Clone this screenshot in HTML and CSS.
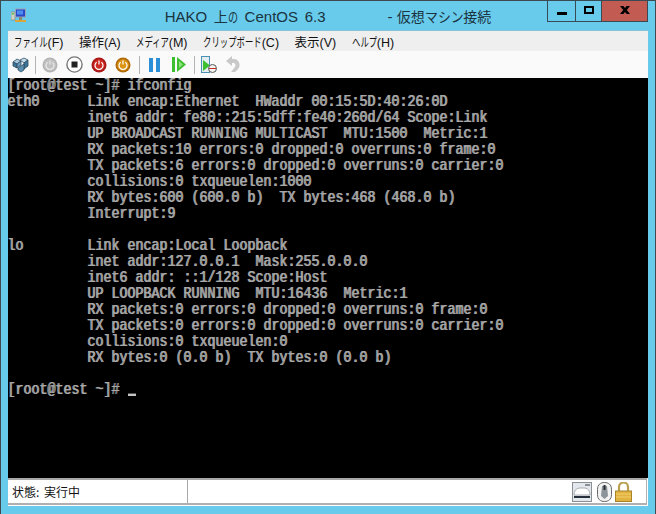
FILE: index.html
```html
<!DOCTYPE html>
<html lang="ja">
<head>
<meta charset="utf-8">
<title>HAKO 上の CentOS 6.3 - 仮想マシン接続</title>
<link rel="stylesheet" href="styles.css">
</head>
<body>
<div class="window">
  <header class="titlebar">
    <svg class="app-icon" width="16" height="16" viewBox="0 0 16 16"><rect x="0" y="4" width="4" height="8" fill="#cfd8c8" stroke="#777" stroke-width=".6"/><rect x="1" y="5" width="2" height="1.5" fill="#5fbf4a"/><rect x="4.5" y="1" width="10" height="8" fill="#2a49c8" stroke="#9aa4b8"/><rect x="6" y="2.5" width="6" height="4" fill="#4d8df0"/><rect x="8" y="9" width="3" height="3" fill="#8a8a70"/><rect x="4" y="12" width="11" height="2" fill="#d9a63c"/></svg>
    <div class="title">
      <span class="title-main">HAKO <span class="cjk">上<span class="no">の</span></span> CentOS 6.3</span>
      <span class="title-sub">- <span class="cjk">仮想<span class="masin">マシン</span>接続</span></span>
    </div>
    <div class="caption">
      <button class="cap cap-min"><span class="glyph-min"></span></button>
      <button class="cap cap-max"><span class="glyph-max"></span></button>
      <button class="cap cap-close"><svg width="10" height="8" viewBox="0 0 10 8"><path d="M0 0h3.400L5 2l1.600-2H10L6.800 4 10 8H6.600L5 6 3.400 8H0l3.200-4z" fill="#000"/></svg></button>
    </div>
  </header>
  <div class="client">
    <nav class="menubar">
      <span><span class="kana kana-4">ファイル</span>(F)</span>
      <span>操作(A)</span>
      <span><span class="kana kana-4">メディア</span>(M)</span>
      <span><span class="kana kana-7">クリップボード</span>(C)</span>
      <span>表示(V)</span>
      <span><span class="kana kana-3">ヘルプ</span>(H)</span>
    </nav>
    <div class="toolbar">
      <svg class="tool" width="17" height="16" viewBox="0 0 17 16"><path d="M1 5l4-3 4 2-4 3z" fill="#a9c8dc" stroke="#2d4f66" stroke-width=".8"/><path d="M1 5l4 2v4L1 9z" fill="#3d7596" stroke="#2d4f66" stroke-width=".8"/><path d="M5 7l4-3v4l-4 3z" fill="#6a9cbc" stroke="#2d4f66" stroke-width=".8"/><path d="M8 3l4-2 4 2-4 3z" fill="#c4dae8" stroke="#2d4f66" stroke-width=".8"/><path d="M12 6l4-3v6l-4 3z" fill="#3d7596" stroke="#2d4f66" stroke-width=".8"/><path d="M6 11l6-4v6l-3 2-3-2z" fill="#5a8fb0" stroke="#2d4f66" stroke-width=".8"/></svg>
      <span class="sep sep-a"></span>
      <svg class="tool" width="16" height="16" viewBox="0 0 16 16"><circle cx="8" cy="8" r="7.500" fill="#b4b4b4"/><circle cx="8" cy="8" r="6" fill="#c2c2c2"/><path d="M5.600 5.200a4 4 0 1 0 4.800 0M8 3.500v4" fill="none" stroke="#e8e8e8" stroke-width="1.200"/></svg>
      <svg class="tool gap" width="17" height="17" viewBox="0 0 17 17"><circle cx="8.500" cy="8.500" r="7.600" fill="#fff" stroke="#777" stroke-width="1.400"/><rect x="5.500" y="5.500" width="6" height="6" fill="#222"/></svg>
      <svg class="tool gap" width="16" height="16" viewBox="0 0 16 16"><circle cx="8" cy="8" r="7.500" fill="#a81616"/><circle cx="8" cy="8" r="5.800" fill="#cc2a20"/><path d="M5.600 5.200a4 4 0 1 0 4.800 0M8 3.500v4" fill="none" stroke="#fff" stroke-width="1.200"/></svg>
      <svg class="tool gap" width="16" height="16" viewBox="0 0 16 16"><circle cx="8" cy="8" r="7.500" fill="#b06a08"/><circle cx="8" cy="8" r="5.800" fill="#dc9414"/><path d="M5.600 5.200a4 4 0 1 0 4.800 0M8 3.500v4" fill="none" stroke="#fff" stroke-width="1.200"/></svg>
      <span class="sep sep-b"></span>
      <svg class="tool" width="11" height="14" viewBox="0 0 11 14"><rect x="0" y="0" width="4" height="14" fill="#2b8fd8"/><rect x="7" y="0" width="4" height="14" fill="#2b8fd8"/></svg>
      <svg class="tool play" width="14" height="15" viewBox="0 0 14 15"><rect x="0" y="0" width="3" height="15" fill="#3dbf2f"/><path d="M5 0l9 7.500L5 15z" fill="#3dbf2f"/><path d="M7 4l4 3.500L7 11z" fill="#8fe07f"/></svg>
      <span class="sep sep-c"></span>
      <svg class="tool" width="16" height="18" viewBox="0 0 16 18"><rect x=".5" y=".5" width="8" height="16" fill="#e4eef2" stroke="#4a90b0"/><path d="M2 4l7 5.500L2 15z" fill="#3dbf2f"/><circle cx="11.500" cy="12.500" r="4" fill="#f4f4f4" stroke="#555"/><path d="M8 12.500h7" stroke="#c83020"/></svg>
      <svg class="tool undo" width="16" height="17" viewBox="0 0 16 17"><path d="M1 5l6-5v3h2a6 6 0 0 1 4 10l-3 3H6l4-5a3 3 0 0 0-1-4H7v3z" fill="#c8c8c8"/></svg>
    </div>
    <div class="console">
<pre class="console-text">[root@test ~]# ifconfig
eth0      Link encap:Ethernet  HWaddr 00:15:5D:40:26:0D
          inet6 addr: fe80::215:5dff:fe40:260d/64 Scope:Link
          UP BROADCAST RUNNING MULTICAST  MTU:1500  Metric:1
          RX packets:10 errors:0 dropped:0 overruns:0 frame:0
          TX packets:6 errors:0 dropped:0 overruns:0 carrier:0
          collisions:0 txqueuelen:1000
          RX bytes:600 (600.0 b)  TX bytes:468 (468.0 b)
          Interrupt:9

lo        Link encap:Local Loopback
          inet addr:127.0.0.1  Mask:255.0.0.0
          inet6 addr: ::1/128 Scope:Host
          UP LOOPBACK RUNNING  MTU:16436  Metric:1
          RX packets:0 errors:0 dropped:0 overruns:0 frame:0
          TX packets:0 errors:0 dropped:0 overruns:0 carrier:0
          collisions:0 txqueuelen:0
          RX bytes:0 (0.0 b)  TX bytes:0 (0.0 b)

[root@test ~]# <span class="cursor"></span></pre>
    </div>
    <footer class="statusbar">
      <div class="status-inner">
        <div class="status-text">状態: 実行中</div>
        <div class="status-icons">
          <svg class="ico-kb" width="20" height="20" viewBox="0 0 20 20"><rect x=".5" y=".5" width="19" height="19" fill="#e4e8ec" stroke="#8a8f94"/><rect x="13" y="2" width="5" height="2" fill="#8a9096"/><path d="M2 13q0-6 5-7h6q5 1 5 7z" fill="#fff" stroke="#a8acb0"/><rect x="2" y="14" width="16" height="2" fill="#26303c"/></svg>
          <svg width="15" height="20" viewBox="0 0 15 20"><path d="M7.500 .5c4 0 7 2 7 7v5c0 5-3 7-7 7s-7-2-7-7v-5c0-5 3-7 7-7z" fill="#f2f2f2" stroke="#666"/><path d="M5 4h5l1 10-3.500 3L4 14z" fill="#8d949a"/><rect x="6.500" y="3" width="2" height="5" fill="#2a2f34"/></svg>
          <svg width="17" height="20" viewBox="0 0 17 20"><path d="M4 9V5a4.500 4.500 0 0 1 9 0v4" fill="none" stroke="#b8a050" stroke-width="2.200"/><rect x=".5" y="9" width="16" height="10.500" fill="#e2b23e" stroke="#a88428"/><path d="M1 12h15M1 15h15" stroke="#f2d070" stroke-width="1"/></svg>
        </div>
      </div>
    </footer>
  </div>
</div>
</body>
</html>
```
FILE: styles.css
```css
* { box-sizing: border-box; }
html, body { margin: 0; padding: 0; }
body { width: 656px; height: 514px; overflow: hidden; font-family: "Liberation Sans", "Noto Sans CJK JP", sans-serif; }

.window {
  width: 656px; height: 514px;
  background: #69cbec;
  border: 1px solid #3f4a50;
  border-bottom: 0;
  display: flex; flex-direction: column;
  padding: 0 7px 8px 7px;
}

.titlebar { height: 30px; display: flex; align-items: flex-start; position: relative; flex: none; }
.app-icon { position: absolute; left: 3px; top: 7px; }
.title {
  flex: 1; display: flex; justify-content: center; align-items: center; height: 30px;
  font: 15px "Liberation Sans", "Noto Sans CJK JP", sans-serif;
  color: #1a3440; gap: 62px;
  white-space: nowrap;
}
.title-main { word-spacing: 2.5px; }
.cjk { font-size: 14px; font-family: "Noto Sans CJK JP", sans-serif; }
.no { display: inline-block; transform: scaleX(.72); transform-origin: 0 50%; margin-right: -.28em; }
.masin { display: inline-block; transform: scaleX(.92); transform-origin: 0 50%; margin-right: -.24em; }

.caption { position: absolute; right: 0; top: -1px; display: flex; height: 22px; }
.cap {
  padding: 0; margin: 0; height: 22px; background: transparent;
  border: 1px solid #3a4a55; border-left-width: 0;
  display: flex; align-items: center; justify-content: center;
}
.cap-min { width: 29px; border-left-width: 1px; }
.cap-max { width: 26px; }
.cap-close { width: 46px; background: #c25b52; }
.glyph-min { width: 10px; height: 3px; background: #000; margin-top: 5px; }
.glyph-max { width: 10px; height: 8px; border: 2px solid #000; margin-bottom: 2px; }
.cap-close svg { margin-bottom: 2px; }

.client {
  width: 640px; flex: 1; display: flex; flex-direction: column;
  box-shadow: 0 -1px 0 0 #86c3dc;
  background: #fff;
}

.menubar {
  height: 20px; flex: none; background: #efefef;
  display: flex; align-items: center; padding-left: 6px; gap: 15.5px;
  font: 12.5px "Liberation Sans", "Noto Sans CJK JP", sans-serif; color: #111;
  white-space: nowrap;
}
.kana { display: inline-block; transform: scaleX(.67); transform-origin: 0 50%; }
.kana-3 { margin-right: -.99em; }
.kana-4 { margin-right: -1.32em; }
.kana-7 { margin-right: -2.31em; }

.toolbar { height: 27px; flex: none; background: #fafafa; display: flex; align-items: center; padding-left: 4px; }
.tool { flex: none; display: block; }
.sep { width: 1px; height: 18px; background: #b4b4b4; flex: none; }
.sep-a { margin: 0 6px; }
.sep-b { margin: 0 9px 0 8px; }
.sep-c { margin: 0 6px 0 8px; }
.gap { margin-left: 8px; }
.play { margin-left: 12px; }
.undo { margin-left: 8px; }

.console {
  width: 640px; height: 400px; flex: none;
  background: #000; overflow: hidden;
}
.console-text {
  margin: 0;
  color: #a8a8a8;
  font: 13.333px/13.333px "Liberation Mono", monospace;
  text-shadow: -1px 0 0 #a8a8a8;
  transform: scaleY(1.2);
  transform-origin: 0 0;
}
.cursor {
  display: inline-block; width: 8px; height: 2px;
  background: #c4c4c4; vertical-align: -2px;
}

.statusbar { flex: 1; background: #fff; display: flex; padding: 0 1px 1px 0; }
.status-inner {
  flex: 1; display: flex; align-items: stretch;
  border-top: 2px solid #a8a8a8;
  border-bottom: 2px solid #b0b0b0;
  border-right: 1px solid #b0b0b0;
}
.status-text {
  width: 180px; flex: none;
  border-right: 1px solid #a8a8a8;
  font: 12px "Noto Sans CJK JP", sans-serif; color: #111; word-spacing: 2px;
  display: flex; align-items: center; padding-left: 4px;
}
.status-icons { margin-left: auto; display: flex; align-items: center; gap: 3px; padding: 1px 14px 0 0; }
.ico-kb { margin-right: 2px; }
```
